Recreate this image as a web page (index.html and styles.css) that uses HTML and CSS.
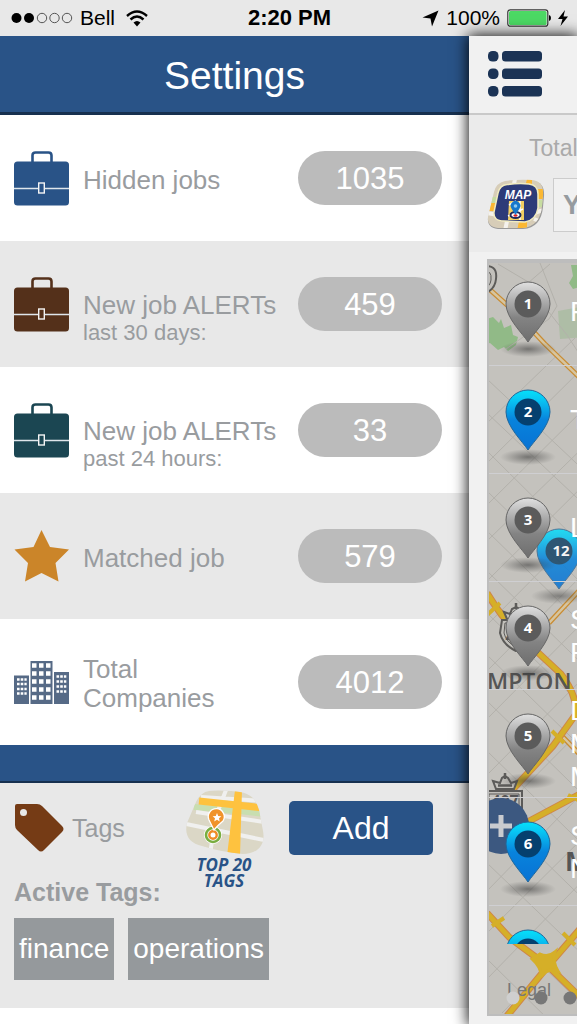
FILE: index.html
```html
<!DOCTYPE html>
<html lang="en">
<head>
<meta charset="utf-8">
<meta name="viewport" content="width=device-width, initial-scale=1">
<title>Settings</title>
<link rel="stylesheet" href="styles.css">
</head>
<body>
<svg class="defs" width="0" height="0" aria-hidden="true">
  <defs>
    <linearGradient id="gray-pin" x1="0" y1="0" x2="0" y2="1"><stop offset="0" stop-color="#e0e0e0"/><stop offset=".3" stop-color="#b0b0b0"/><stop offset=".6" stop-color="#838383"/><stop offset="1" stop-color="#6e6e6e"/></linearGradient>
    <linearGradient id="blue-pin" x1="0" y1="0" x2="0" y2="1"><stop offset="0" stop-color="#05e0fa"/><stop offset=".15" stop-color="#08c8f4"/><stop offset=".5" stop-color="#0883dc"/><stop offset="1" stop-color="#0872d4"/></linearGradient>
    <radialGradient id="pin-shadow"><stop offset="0" stop-color="#333" stop-opacity=".55"/><stop offset="1" stop-color="#444" stop-opacity="0"/></radialGradient>
    <symbol id="briefcase" viewBox="0 0 55 55">
      <path d="M18.500 11V4.500Q18.500 1.500 21.500 1.500H34.500Q37.500 1.500 37.500 4.500V11" fill="none" stroke="currentColor" stroke-width="2.600"/>
      <rect y="10.500" width="55" height="44" rx="3.500" fill="currentColor"/>
      <path d="M0 37.500H24M31 37.500H55" stroke="#dfe6ec" stroke-width="1.300"/>
      <rect x="24.700" y="32" width="5.600" height="10" fill="none" stroke="#f4f4f4" stroke-width="1.400"/>
    </symbol>
    <symbol id="pin" viewBox="0 0 60 80">
      <ellipse cx="30" cy="69" rx="28" ry="8" fill="url(#pin-shadow)" stroke="none"/>
      <path d="M30 62C25 54 8 38 8 24A22 22 0 0 1 52 24C52 38 35 54 30 62Z"/>
    </symbol>
  </defs>
</svg>

<header class="status">
  <div class="status-side">
    <svg width="62" height="12" viewBox="0 0 62 12" aria-hidden="true"><circle cx="5.500" cy="6" r="5"/><circle cx="18" cy="6" r="5"/><g fill="none" stroke="#555"><circle cx="31" cy="6" r="4.700"/><circle cx="43.500" cy="6" r="4.700"/><circle cx="56" cy="6" r="4.700"/></g></svg>
    <span class="carrier">Bell</span>
    <svg width="22" height="17" viewBox="0 0 22 17" aria-hidden="true"><g fill="none" stroke="#000" stroke-width="2.400"><path d="M1 6Q11-3 21 6"/><path d="M4.500 9.500Q11 3.500 17.500 9.500"/></g><path d="M7.500 12.500Q11 9.500 14.500 12.500L11 16.500Z"/></svg>
  </div>
  <time class="clock">2:20 PM</time>
  <div class="status-side status-end">
    <svg width="17" height="17" viewBox="0 0 17 17" aria-hidden="true"><path d="M16.500 0.500L10 16.500L8.500 8.500L0.500 7.500Z"/></svg>
    <span class="percent">100%</span>
    <svg width="44" height="18" viewBox="0 0 44 18" aria-hidden="true"><rect x=".8" y=".8" width="40" height="16.400" rx="2.500" fill="#fff" stroke="#333" stroke-width="1.200"/><rect x="2" y="2" width="37.600" height="14" rx="1.500" fill="#4cd964"/><path d="M42 6Q44 6.500 44 9T42 12Z"/></svg>
    <svg width="10" height="18" viewBox="0 0 10 18" aria-hidden="true"><path d="M7 1L0 10H4.500L2.500 17L10 7.500H5.500Z"/></svg>
  </div>
</header>

<div class="screen">
  <main class="settings">
    <h1 class="title">Settings</h1>
    <ul class="stats">
      <li class="stat"><svg class="stat-icon blue"><use href="#briefcase"/></svg><p class="label">Hidden jobs</p><output class="count">1035</output></li>
      <li class="stat"><svg class="stat-icon brown"><use href="#briefcase"/></svg><p class="label label-two">New job ALERTs<small>last 30 days:</small></p><output class="count">459</output></li>
      <li class="stat"><svg class="stat-icon teal"><use href="#briefcase"/></svg><p class="label label-two">New job ALERTs<small>past 24 hours:</small></p><output class="count">33</output></li>
      <li class="stat"><svg class="stat-icon" viewBox="0 0 55 55"><path d="M27.500 1L36 18L55 20.500L41.500 34L44.500 52.500L27.500 44L11 52.500L14 34L.5 20.500L19.500 18Z" fill="#cb8529"/></svg><p class="label">Matched job</p><output class="count">579</output></li>
      <li class="stat">
        <svg class="stat-icon" viewBox="0 0 55 55"><path d="M0 20.500H15V49H0ZM16.500 6H38.500V49H16.500ZM40 17H55V49H40Z" fill="#566a86"/><g stroke="#fff" fill="none"><path stroke-width="4.500" stroke-dasharray="4.500 2.500" d="M18 10.500H37M18 18.500H37M18 26.500H37M18 34.500H37M18 42.500H37"/><path stroke-width="2.600" stroke-dasharray="2.600 1.100" d="M3 24.500H12.700M3 29H12.700M3 34H12.700M3 38.500H12.700M42.500 21.500H52.300M42.500 26.500H52.300M42.500 31.500H52.300M42.500 36.500H52.300"/></g></svg>
        <p class="label">Total<br>Companies</p><output class="count">4012</output></li>
    </ul>
    <div class="band"></div>
    <section class="tags">
      <div class="tags-head">
        <svg width="50" height="50" viewBox="0 0 50 50" aria-hidden="true"><path fill="#753b15" fill-rule="evenodd" d="M3 1H23Q26 1 28 3L48 23Q51 26 48 29L30 47Q27 50 24 47L3 27Q1 25 1 22V3Q1 1 3 1ZM9.500 6A3.500 3.500 0 1 0 9.500 13A3.500 3.500 0 1 0 9.500 6Z"/></svg>
        <h2 class="tags-title">Tags</h2>
      </div>
      <svg class="top-tags" width="78" height="98" viewBox="0 0 78 98" role="img" aria-label="Top 20 tags">
        <clipPath id="blob"><path d="M23 1Q30 0 45 1C62 2 69 6 73 20L77 41C80 56 70 64 57 64Q35 62 16 56C4 53-2 46 1 33L10 12Q15 2 23 1Z"/></clipPath>
        <g clip-path="url(#blob)">
          <path fill="#dbd7c6" d="M0 0H78V66H0Z"/>
          <path d="M8 17L48 21M54 21L78 24" stroke="#c8deb0" stroke-width="6"/>
          <g stroke="#f0f0ef" stroke-width="4" fill="none"><path d="M40 0L30 26L24 64M15 7L78 11M10 22L78 32M0 34L78 50"/></g>
          <path d="M13 11L78 18" stroke="#fec23f" stroke-width="7"/><path d="M49 0H56L54 66H41Z" fill="#fec23f"/>
        </g>
        <circle cx="27" cy="45" r="9" fill="#fff"/><circle cx="27" cy="45" r="7" fill="#fff" stroke="#79ad40" stroke-width="2.600"/><circle cx="27" cy="45" r="3.700" fill="#fff" stroke="#ef8b25" stroke-width="2.400"/>
        <path d="M28 40L23 30A8 8 0 1 1 37 31Q31 36 28 40Z" fill="#f0932b" stroke="#fff" stroke-width="1.300"/>
        <path d="M31 23L32.200 26L35.400 26.300L33 28.300L33.700 31.500L31 29.800L28.200 31.500L29 28.300L26.600 26.300L29.800 26Z" fill="#fff"/>
        <text x="38" y="81" class="top-text">TOP 20</text><text x="38" y="97" class="top-text">TAGS</text>
      </svg>
      <button class="add" type="button">Add</button>
      <h3 class="active-title">Active Tags:</h3>
      <div class="chips"><button type="button" class="chip">finance</button><button type="button" class="chip">operations</button></div>
    </section>
  </main>

  <aside class="drawer">
    <div class="drawer-head">
      <button class="menu" type="button" aria-label="Menu"><svg width="56" height="48" viewBox="0 0 56 48"><g fill="#1b3355"><rect x="1" y="1" width="10.500" height="10.500" rx="4.500"/><rect x="1" y="18.500" width="10.500" height="10.500" rx="4.500"/><rect x="1" y="36" width="10.500" height="10.500" rx="4.500"/><rect x="15" y="1" width="40" height="10.500" rx="3.500"/><rect x="15" y="18.500" width="40" height="10.500" rx="3.500"/><rect x="15" y="36" width="40" height="10.500" rx="3.500"/></g></svg></button>
    </div>
    <div class="search">
      <label class="total" for="query">Total</label>
      <div class="search-row">
        <button class="map-button" type="button" aria-label="Map"><svg width="58" height="52" viewBox="0 0 58 52">
          <clipPath id="tile"><path d="M18 2Q32 0 45 1Q57 2 56 16L55 27Q53 48 35 49L14 49Q0 49 1 38L7 13Q9 4 18 2Z"/></clipPath>
          <path d="M18 3Q32 1 45 2Q58 3 57 17L56 28Q54 49 36 50L14 50Q0 50 1 39Z" fill="#999"/>
          <g clip-path="url(#tile)"><path d="M0 0H58V52H0Z" fill="#d7cdb8"/><path d="M12 0L22 7M40 0L38 8H45V0M58 10H48V20H58M4 24H12V32H2M32 42H40V52H30M8 12L15 18" fill="#fbb833"/><path d="M49 21H58V28H49M3 18H10V24H3" fill="#c6dca0"/><path d="M28 0L26 10M0 34L16 37M18 52L20 42M47 40L57 44M47 34L57 31" stroke="#f4f2ed" stroke-width="4"/></g>
          <path d="M20 5.500Q32 4 42 5Q51 6 51 15V29Q49 41 38 43L17 42Q6 42 7 33L11 14Q13 6 20 5.500Z" fill="#2d3b78" stroke="#f2ecc0" stroke-width="1.500"/>
          <text x="31" y="20" class="map-text">MAP</text>
          <path d="M22 22H37V41H21Z" fill="#f3cf62"/><path d="M22 26L29 22M21 37L36 30M33 22V41" stroke="#fff" stroke-width="1.500"/><ellipse cx="28.500" cy="36" rx="5" ry="3" fill="#fff" stroke="#202a5c" stroke-width="2"/><ellipse cx="28.500" cy="36.500" rx="2" ry="1.300" fill="#d22"/>
          <path d="M28.500 36L24.500 29.500A4.800 4.800 0 1 1 32.500 29.500Z" fill="#1678cc"/><circle cx="28.500" cy="27" r="1.800" fill="#8ccaf0"/>
        </svg></button>
        <input class="query" id="query" type="text" placeholder="Y">
      </div>
    </div>
    <div class="map">
      <svg class="map-art" width="400" height="757" viewBox="487 260 400 757" aria-hidden="true">
        <path d="M487 318L493 316L499 322L501 318L504 327L511 324L513 334L518 336L516 344L508 350L504 346L498 349L490 342L487 343ZM571 264H590V290L580 286L573 288L569 282L573 275Z" fill="#91ba87"/>
        <path d="M558 310L590 304V336L560 338Z" fill="#aebda6"/>
        <g fill="none" stroke="#b3b1ab" stroke-width="1"><path d="M498 263L530 282L548 310L567 334L580 354M540 262L557 305L549 318L506 348M528 282L550 263M487 378L610 494M487 412L610 528M487 450L610 572M487 490L610 610M487 530L610 650M487 570L610 690M487 612L610 732M487 654L610 774M487 700L610 820M487 750L610 870M487 804L610 924M487 862L610 980M487 912L610 1030M487 958L560 1030M487 422L575 337M487 462L600 350M487 504L600 392M487 540L600 430M487 580L600 468M487 624L600 510M487 670L600 556M487 718L600 604M487 774L600 660M487 824L600 710M487 890L600 774M487 932L600 820M487 978L600 862M502 1012L600 912"/></g>
        <g fill="none" stroke="#c98c32" stroke-width="5"><path d="M487 286L517 313L545 343L580 377"/><path d="M549 622L590 578M560 733L590 764"/></g>
        <g fill="none" stroke="#d6c5a0" stroke-width="2.500"><path d="M487 286L517 313L545 343L580 377M549 622L590 578M560 733L590 764"/></g>
        <g fill="none" stroke="#cf8648" stroke-width="7"><path d="M487 592Q500 614 517 632L561 673Q577 694 576 713L553 745L514 787L487 820M520 825L580 793M487 912L509 936Q526 949 548 965L580 996M507 1015L548 965L580 928"/></g>
        <g fill="none" stroke="#d5af28" stroke-width="5"><path d="M487 592Q500 614 517 632L561 673Q577 694 576 713L553 745L514 787L487 820M520 825L580 793M487 912L509 936Q526 949 548 965L580 996M507 1015L548 965L580 928"/></g>
        <path d="M487 614L500 602M492 925L504 917M563 932L575 944M552 730L564 742M568 794L580 800" stroke="#d5af28" stroke-width="4"/>
        <path d="M540 953Q548 957 555 951Q552 960 558 970Q548 966 541 976Q542 967 532 958Z" fill="#d5af28" stroke="#d5af28" stroke-width="3"/>
        <g fill="#c2c0bb" stroke="#5c5b59" stroke-width="2"><path d="M481 266Q498 262 496 278Q495 290 481 294"/><path d="M484 272Q492 268 491 279Q490 286 484 287" stroke-width="1"/>
          <path d="M502 619H532V632Q528 645 516 650Q503 644 500 632Z"/><path d="M505 622H529V632Q526 642 516 646Q506 641 504 632Z" stroke-width="1"/>
          <path d="M507 618L504 611L510 613L512 608L516 606L520 608L522 613L528 611L525 618Z"/><path d="M516 602V608M509 615.500H523" stroke-width="2.500"/>
          <path d="M487 790H522V815H487Z"/><path d="M489 793H519V815H489Z" stroke-width="1"/>
          <path d="M496 788L493 780L500 782L502 777L505 775L508 777L511 782L517 780L514 788Z"/><path d="M505 772V778M498 784.500H512" stroke-width="2.500"/></g>
        <text x="505" y="806" class="road-number">407</text><text x="510" y="641" class="road-number">4</text>
        <text x="487" y="689" class="place">MPTON</text><text x="565" y="870" class="place place-bold">M</text>
        <g opacity=".85"><use href="#pin" x="529" y="526" width="60" height="80" fill="url(#blue-pin)" stroke="#386a94"/><circle cx="559" cy="550" r="13.500" fill="#144568"/><text x="561" y="555" class="pin-number">12</text></g>
        <text x="507" y="995" class="legal">Legal</text>
        <circle cx="513" cy="997" r="6.500" fill="#cfcfcf"/><circle cx="541" cy="997" r="6.500" fill="#777"/><circle cx="570" cy="997" r="6.500" fill="#777"/>
      </svg>
      <button class="plus" type="button" aria-label="Zoom in"><svg width="22" height="22" viewBox="0 0 22 22"><path d="M11 0V22M0 11H22" stroke="#c9cbcf" stroke-width="5"/></svg></button>
      <ol class="jobs">
        <li class="job"><svg class="pin gray" width="60" height="80"><use href="#pin"/><circle cx="30" cy="24" r="13.500"/><text x="30" y="29" class="pin-number">1</text></svg><span>F</span></li>
        <li class="job"><svg class="pin azure" width="60" height="80"><use href="#pin"/><circle cx="30" cy="24" r="13.500"/><text x="30" y="29" class="pin-number">2</text></svg><span>T</span></li>
        <li class="job"><svg class="pin gray" width="60" height="80"><use href="#pin"/><circle cx="30" cy="24" r="13.500"/><text x="30" y="29" class="pin-number">3</text></svg><span>L</span></li>
        <li class="job"><svg class="pin gray" width="60" height="80"><use href="#pin"/><circle cx="30" cy="24" r="13.500"/><text x="30" y="29" class="pin-number">4</text></svg><span>S<br>P</span></li>
        <li class="job"><svg class="pin gray" width="60" height="80"><use href="#pin"/><circle cx="30" cy="24" r="13.500"/><text x="30" y="29" class="pin-number">5</text></svg><span>D<br>M<br>M</span></li>
        <li class="job"><svg class="pin azure" width="60" height="80"><use href="#pin"/><circle cx="30" cy="24" r="13.500"/><text x="30" y="29" class="pin-number">6</text></svg><span>S<br>N</span></li>
        <li class="job"><svg class="pin azure" width="60" height="80"><use href="#pin"/><circle cx="30" cy="24" r="13.500"/></svg></li>
      </ol>
    </div>
  </aside>
</div>
</body>
</html>
```

FILE: styles.css
```css
* { box-sizing: border-box; }
body {
  margin: 0;
  min-height: 100vh;
  display: flex;
  flex-direction: column;
  overflow-x: hidden;
  background: #fff;
  font-family: "Liberation Sans", Arial, sans-serif;
  color: #999c9f;
}
button, input { font: inherit; border: 0; padding: 0; margin: 0; background: none; color: inherit; }
h1, h2, h3, p, ul, ol { margin: 0; padding: 0; font-weight: normal; list-style: none; }
svg { display: block; flex: none; }
.defs { position: absolute; }

.status {
  display: grid;
  grid-template-columns: 1fr auto 1fr;
  align-items: center;
  height: 36px;
  padding: 0 9px 0 11px;
  background: #e8e8e8;
  color: #000;
  font-size: 21px;
}
.status-side { display: flex; align-items: center; gap: 7px; }
.status-end { justify-content: flex-end; }
.carrier { margin-right: 4px; }
.clock { font-weight: bold; font-size: 22px; }

.screen {
  flex: 1;
  display: grid;
  grid-template-columns: 469fr 108fr;
}
.settings { min-width: 0; }
.title {
  height: 79px;
  line-height: 80px;
  background: #295387;
  border-bottom: 3px solid #17304f;
  color: #fff;
  font-size: 39px;
  text-align: center;
}
.stat {
  display: grid;
  grid-template-columns: 55px 1fr 144px;
  column-gap: 14px;
  align-items: center;
  min-height: 126px;
  padding: 0 27px 0 14px;
  background: #fff;
}
.stat:nth-child(even) { background: #e8e8e8; }
.stat-icon { width: 55px; height: 55px; }
.blue { color: #295387; }
.brown { color: #54301a; }
.teal { color: #1b4652; }
.label { padding-top: 4px; font-size: 26px; line-height: 29px; white-space: nowrap; }
.label small { display: block; font-size: 22px; line-height: 26px; }
.label-two { padding-top: 29px; }
.count {
  height: 54px;
  line-height: 56px;
  border-radius: 27px;
  background: #bbb;
  color: #fff;
  font-size: 31px;
  text-align: center;
}
.band { height: 38px; background: #295387; border-bottom: 2px solid #17304f; }

.tags {
  display: grid;
  grid-template-columns: 1fr 78px 144px;
  grid-template-rows: 76px 52px auto;
  column-gap: 25px;
  align-items: center;
  padding: 7px 36px 28px 14px;
  background: #e8e8e8;
}
.tags-head { display: flex; align-items: center; gap: 8px; }
.tags-title { font-size: 25px; }
.top-tags { grid-column: 2; grid-row: 1 / 3; align-self: start; }
.top-text { font: italic bold 17px "Open Sans", sans-serif; fill: #295387; text-anchor: middle; }
.add { height: 54px; border-radius: 5px; background: #295387; color: #fff; font-size: 32px; }
.active-title { grid-column: 1; grid-row: 2; font-size: 25px; font-weight: bold; white-space: nowrap; }
.chips { grid-column: 1 / -1; display: flex; gap: 14px; }
.chip { height: 62px; padding: 0 5px; background: #95999c; color: #fff; font-size: 28px; }

.drawer {
  display: flex;
  flex-direction: column;
  min-width: 0;
  background: #f1f1f1;
  box-shadow: 0 0 14px 1px rgba(0, 0, 0, .95);
}
.drawer-head {
  height: 79px;
  padding: 14px 18px;
  border-bottom: 2px solid #c9c9c9;
}
.search {
  height: 137px;
  padding: 18px 0 0 18px;
  background: #ebebeb;
  overflow: hidden;
}
.total { display: block; padding-left: 42px; font-size: 23px; line-height: 30px; color: #aaa; }
.search-row { display: flex; align-items: center; gap: 8px; padding-top: 15px; }
.map-text { font: italic bold 12px "Liberation Sans", sans-serif; fill: #fff; text-anchor: middle; }
.query {
  flex: none;
  width: 200px;
  height: 54px;
  padding-left: 9px;
  background: #f1f1f1;
  border: 1px solid #ccc;
  font-size: 27px;
  font-weight: bold;
}
.query::placeholder { color: #969b9f; opacity: 1; }

.map {
  position: relative;
  flex: 1;
  min-height: 757px;
  margin: 7px 0 9px 18px;
  border: solid #bdbdbd;
  border-width: 4px 0 2px 2px;
  background: #c4c2bd;
  overflow: hidden;
}
.map-art { position: absolute; top: -2px; left: -2px; }
.road-number { font: bold 16px "Open Sans", sans-serif; fill: #555; text-anchor: middle; }
.place { font: 600 23px "Open Sans", sans-serif; fill: #555; }
.place-bold { font-weight: bold; font-size: 26px; }
.legal { font: 18px "Liberation Sans", sans-serif; fill: #777; }
.plus {
  position: absolute;
  top: 535px;
  left: -16px;
  width: 56px;
  height: 56px;
  border-radius: 50%;
  background: #3c5880;
  display: grid;
  place-items: center;
}
.jobs { position: absolute; inset: -5px 0 70px -2px; overflow: hidden; }
.job {
  display: flex;
  align-items: center;
  gap: 12px;
  height: 108px;
  padding-left: 11px;
  border-bottom: 1px solid #cfcfd2;
  color: #fff;
  font-size: 28px;
  line-height: 33px;
}
.job:last-child { border: 0; }
.pin { margin-top: 16px; }
.gray { fill: url(#gray-pin); stroke: #666; }
.azure { fill: url(#blue-pin); stroke: #21679b; }
.pin circle { fill: #5b5b5b; stroke: none; }
.azure circle { fill: #05406f; }
.pin-number { font: bold 15px "Open Sans", sans-serif; fill: #fff; stroke: none; text-anchor: middle; }
```
